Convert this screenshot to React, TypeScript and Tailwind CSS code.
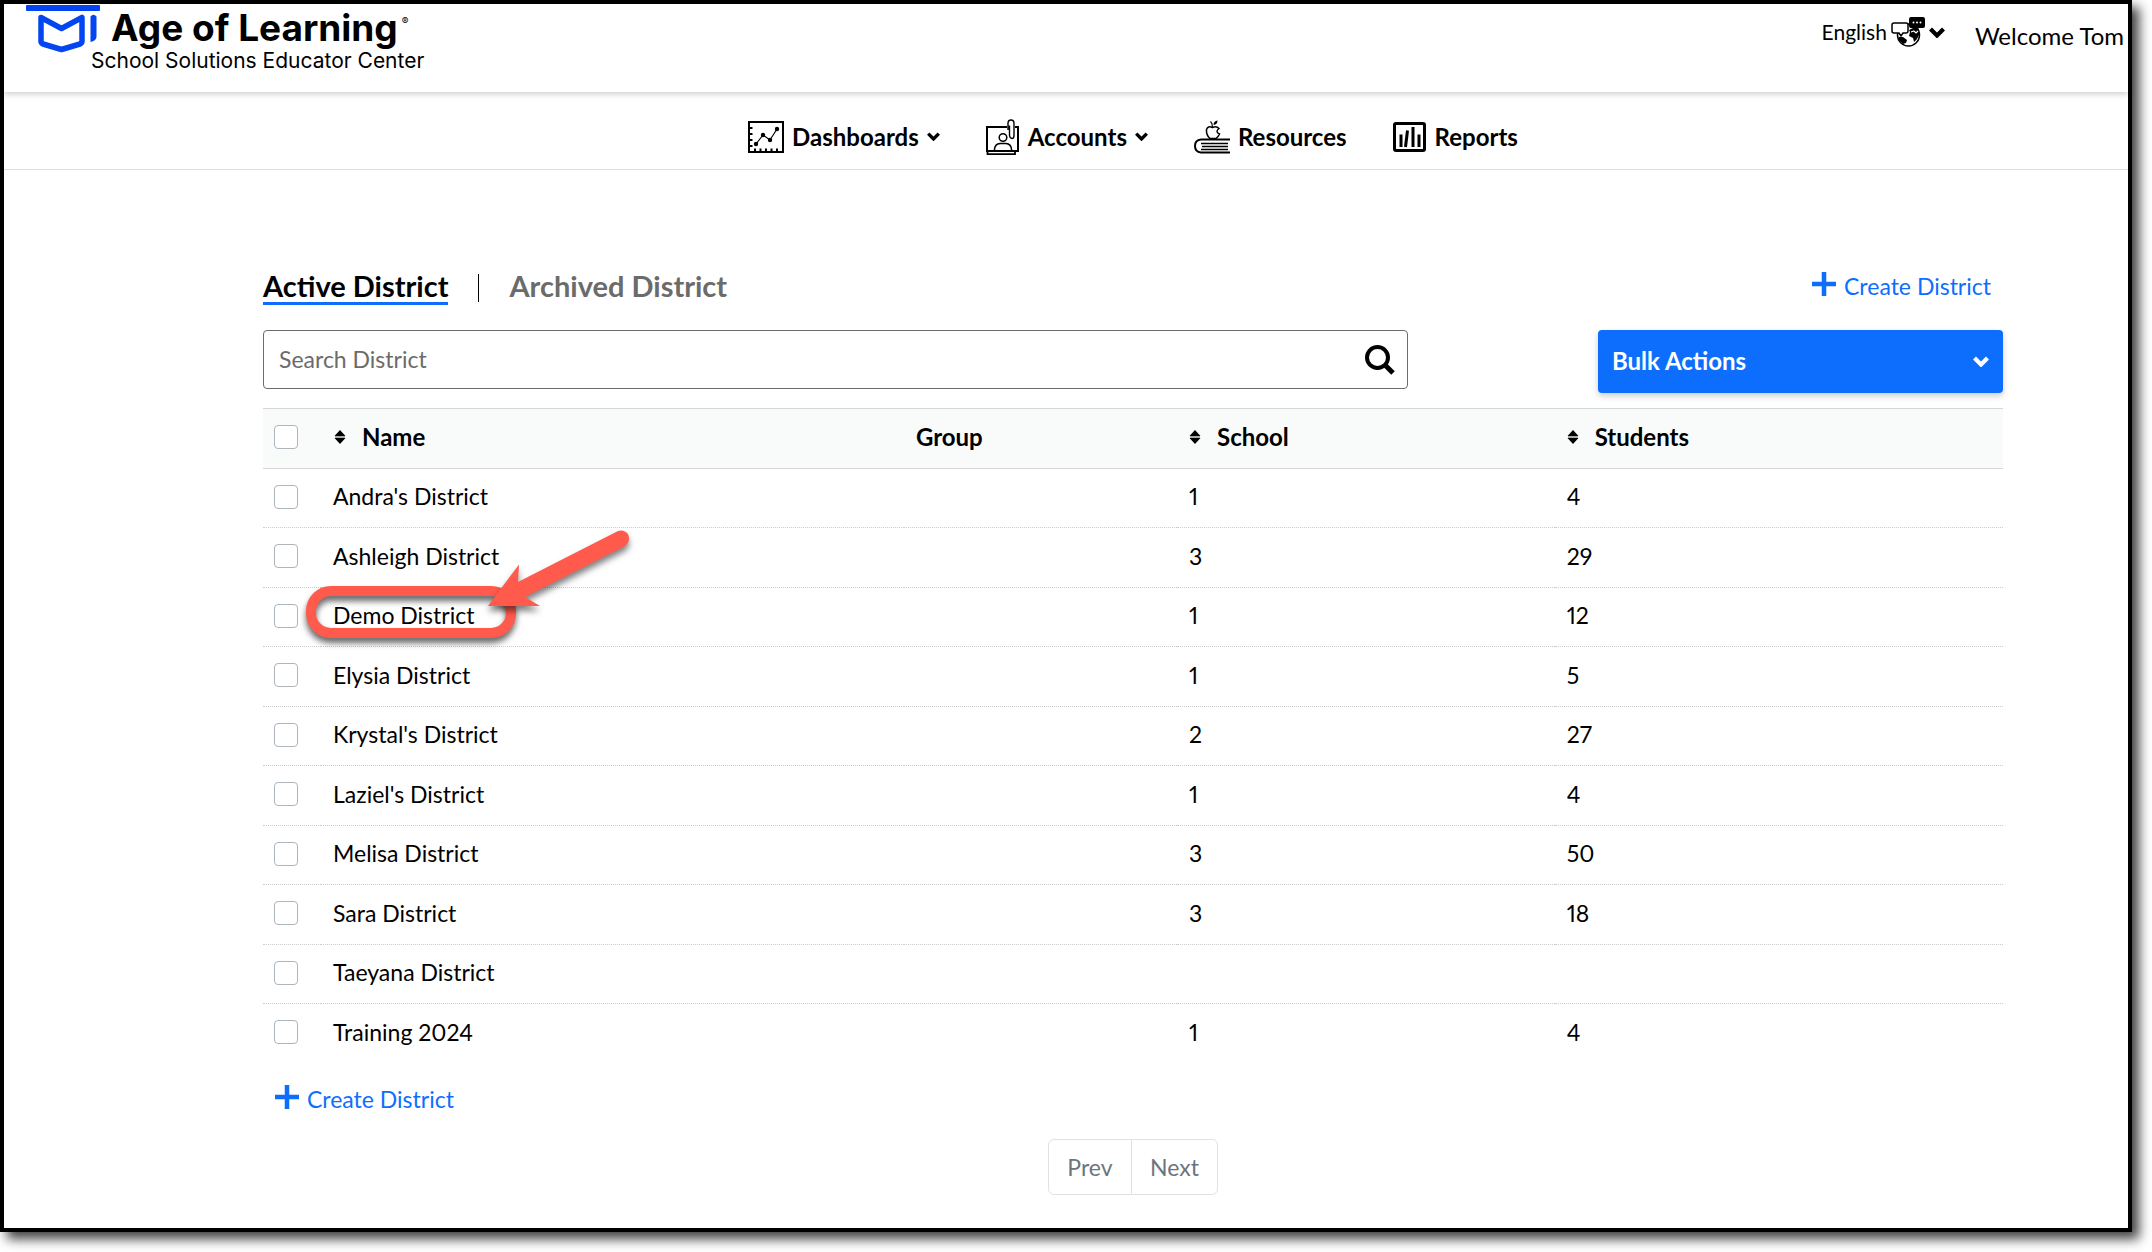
import React from 'react';

interface District {
  name: string;
  group?: string;
  schools?: number;
  students?: number;
  highlighted?: boolean;
}

const districts: District[] = [
  { name: "Andra's District", schools: 1, students: 4 },
  { name: 'Ashleigh District', schools: 3, students: 29 },
  { name: 'Demo District', schools: 1, students: 12, highlighted: true },
  { name: 'Elysia District', schools: 1, students: 5 },
  { name: "Krystal's District", schools: 2, students: 27 },
  { name: "Laziel's District", schools: 1, students: 4 },
  { name: 'Melisa District', schools: 3, students: 50 },
  { name: 'Sara District', schools: 3, students: 18 },
  { name: 'Taeyana District' },
  { name: 'Training 2024', schools: 1, students: 4 },
];

const LogoMark = () => (
  <svg width="74" height="48" viewBox="0 0 74 48" className="shrink-0" aria-hidden="true">
    <rect x="0" y="0" width="74" height="6" rx="1" fill="#0345f0" />
    <path
      d="M15 12.5 35.500 23.500 56 12.500V36.500Q56 38 54 39L35.500 44.500 17 39Q15 38 15 36.500Z"
      fill="none"
      stroke="#0345f0"
      strokeWidth="5.500"
      strokeLinejoin="round"
    />
    <path d="M64.500 11.500Q67.500 8 70.500 11.500V32Q70 36 64.500 37Z" fill="#0345f0" />
  </svg>
);

const ChevronIcon = ({ className }: { className: string }) => (
  <svg viewBox="0 0 16 11" className={className} aria-hidden="true">
    <path d="M1.500 2 8 8.500 14.500 2" fill="none" stroke="currentColor" strokeWidth="4.200" />
  </svg>
);

const LanguageIcon = () => (
  <svg width="34" height="30" viewBox="0 0 34 30" aria-hidden="true">
    <circle cx="17.500" cy="18" r="11" fill="#fff" stroke="#000" strokeWidth="1.500" />
    <path d="M18 13 24 10 28 13 28.500 17 26 22 23 25 22 21 18 19 19 15Z" />
    <path d="M8 20 12 20 16 23 15 26 12 27 8 23Z" />
    <path d="M20 15 23 14 25 16 27 14" fill="none" stroke="#fff" strokeWidth="1.200" />
    <path
      d="M3 6H15Q17 6 17 8V14Q17 16 15 16H12L10 19 8 16H3Q1 16 1 14V8Q1 6 3 6Z"
      fill="#fff"
      stroke="#000"
      strokeWidth="1.500"
    />
    <path d="M20 0H32Q34 0 34 2V9Q34 11 32 11H28L24 14 22 11H20Q18 11 18 9V2Q18 0 20 0Z" />
    <circle cx="22.500" cy="5.500" r="1" fill="#fff" />
    <circle cx="26" cy="5.500" r="1" fill="#fff" />
    <circle cx="29.500" cy="5.500" r="1" fill="#fff" />
  </svg>
);

const DashboardsIcon = () => (
  <svg width="36" height="36" viewBox="0 0 36 36" fill="none" stroke="#000" aria-hidden="true">
    <rect x="1" y="3" width="34" height="30" strokeWidth="2" />
    <path d="M2 9H4.500M2 15H4.500M2 21H4.500M2 27H4.500M7 32V29.500M12.500 32V29.500M18 32V29.500M23.500 32V29.500M29 32V29.500" strokeWidth="2" />
    <path d="M8 25 15 16 22 21 29 10" strokeWidth="1.200" />
    <g fill="#000" stroke="none">
      <circle cx="8" cy="25" r="2.200" />
      <circle cx="15" cy="16" r="2.200" />
      <circle cx="22" cy="21" r="2.200" />
      <circle cx="29" cy="10" r="2.200" />
    </g>
  </svg>
);

const AccountsIcon = () => (
  <svg width="34" height="36" viewBox="0 0 34 36" fill="none" stroke="#000" aria-hidden="true">
    <path d="M21 8H1V32H32V8H29" strokeWidth="2" />
    <path d="M1.500 32V35.200H29V32" strokeWidth="1.800" />
    <circle cx="17" cy="18.500" r="3.800" strokeWidth="1.500" />
    <path d="M8.500 31V30Q9 25 14 24.500H20Q25 25 25.500 30V31" strokeWidth="1.500" />
    <path d="M22 11V4.500Q22 1 25 1T28 4.500V16.500Q28 19.500 26 19.500T23.500 16.500V6.500" strokeWidth="1.400" />
  </svg>
);

const ResourcesIcon = () => (
  <svg width="36" height="36" viewBox="0 0 36 36" fill="none" stroke="#000" aria-hidden="true">
    <path d="M36 20.500H7Q1 21 1 27T7 33.500H36" strokeWidth="2" />
    <path d="M7 24.500H34M8 27.500H34M7 30.500H34" strokeWidth="1.400" />
    <path
      d="M18.500 8.500Q14 6.500 12.500 10.500 12 16 16 19.500H22Q24.500 17.500 25.500 15 23 14 23 12.500T25 9.500Q22.500 6.500 18.500 8.500Z"
      strokeWidth="1.500"
    />
    <path d="M18.500 8Q18.500 4 16.500 2.500" strokeWidth="1.200" />
    <path d="M19.500 6Q19.500 2 23.500 1.500 23.500 5.500 19.500 6Z" fill="#000" stroke="none" />
  </svg>
);

const ReportsIcon = () => (
  <svg width="34" height="36" viewBox="0 0 34 36" fill="none" stroke="#000" aria-hidden="true">
    <rect x="1.500" y="4.500" width="30" height="27" rx="1.500" strokeWidth="3" />
    <path d="M8 15.500V28M20 8V28M26 15.500V28" strokeWidth="3" />
    <path d="M14.500 11.500 12.500 28" strokeWidth="3" />
  </svg>
);

const PlusIcon = () => (
  <svg width="24" height="24" viewBox="0 0 24 24" className="mb-1" aria-hidden="true">
    <path d="M12 0V24M0 12H24" stroke="currentColor" strokeWidth="4.500" />
  </svg>
);

const SearchIcon = () => (
  <svg width="30" height="30" viewBox="0 0 30 30" fill="none" stroke="#000" aria-hidden="true">
    <circle cx="12.500" cy="12.500" r="10.500" strokeWidth="4" />
    <path d="M20 20 28 28" strokeWidth="5" />
  </svg>
);

const SortIcon = () => (
  <svg width="12" height="14" viewBox="0 0 12 14" aria-hidden="true">
    <rect x="1" y="6" width="10" height="2" fill="#aaa" />
    <path d="M6 0 11.500 6H.5ZM6 14 11.500 8H.5Z" />
  </svg>
);

// Callout ring and arrow drawn over the highlighted row
const Callout = () => (
  <svg
    width="350"
    height="140"
    viewBox="0 0 350 140"
    className="pointer-events-none absolute -top-17 -left-7 z-10 max-w-none"
    aria-hidden="true"
  >
    <g className="drop-shadow-[0_5px_3px_rgba(0,0,0,0.6)]">
      <rect x="18" y="71" width="200" height="42" rx="20" fill="none" stroke="#ff5a4c" strokeWidth="10" />
    </g>
    <g className="drop-shadow-[0_5px_3px_rgba(0,0,0,0.5)]" fill="#ff5a4c">
      <path d="M195 86 226 44.500 225 62 325 11Q331 9 335 14 338 21 332 26L232 77 247 86Z" />
    </g>
  </svg>
);

const NavLink = ({ icon, label, menu }: { icon: React.ReactNode; label: string; menu?: boolean }) => {
  const content = (
    <>
      {icon}
      <span>{label}</span>
      {menu && <ChevronIcon className="w-[13px]" />}
    </>
  );

  return menu ? (
    <button type="button" className="flex items-center gap-2">
      {content}
    </button>
  ) : (
    <a href="#" className="flex items-center gap-2">
      {content}
    </a>
  );
};

const Checkbox = ({ label }: { label: string }) => (
  <input
    type="checkbox"
    aria-label={label}
    className="block size-6 appearance-none rounded border border-[#adb5bd] bg-white"
  />
);

const SortHeader = ({ label }: { label: string }) => (
  <button type="button" className="flex items-center gap-4 font-bold">
    <SortIcon />
    {label}
  </button>
);

const CreateLink = () => (
  <a href="#" className="flex items-center gap-2 text-[#0d6efd]">
    <PlusIcon />
    Create District
  </a>
);

const Header = () => (
  <header className="flex h-22 items-start justify-between pr-1 pl-[22px] shadow-[0_2px_6px_rgba(0,0,0,0.2)]">
    <a href="#" className="flex pt-px font-['Inter',sans-serif]">
      <LogoMark />
      <div className="-ml-[9px]">
        <div className="flex pl-5 text-[37px] leading-[46px] font-bold">
          Age of Learning
          <span className="pt-2 pl-1 text-[10px] leading-4 font-normal">®</span>
        </div>
        <div className="text-[21px] leading-5">School Solutions Educator Center</div>
      </div>
    </a>
    <div className="flex items-start gap-[30px] pt-3">
      <button type="button" className="flex items-center gap-1 text-[21px]">
        English
        <LanguageIcon />
        <ChevronIcon className="w-4" />
      </button>
      <span className="pt-1 text-2xl">Welcome Tom</span>
    </div>
  </header>
);

const App: React.FC = () => {
  return (
    <div className="pr-5 pb-5 font-['Lato',sans-serif] text-[23px] leading-8 text-black">
      <div className="border-4 border-black bg-white shadow-[7px_7px_11px_rgba(0,0,0,0.75)]">
        <Header />

        <nav className="flex h-[78px] items-center justify-center gap-[46px] border-b border-[#dcdcdc] pt-3 pr-[125px] pl-[259px] text-2xl font-bold">
          <NavLink icon={<DashboardsIcon />} label="Dashboards" menu />
          <NavLink icon={<AccountsIcon />} label="Accounts" menu />
          <NavLink icon={<ResourcesIcon />} label="Resources" />
          <NavLink icon={<ReportsIcon />} label="Reports" />
        </nav>

        <main className="pt-25 pr-[125px] pb-[33px] pl-[259px]">
          {/* Tabs */}
          <div className="flex h-9 items-start justify-between pr-3">
            <div className="flex items-center text-[29px] font-bold">
              <a href="#" className="border-b-3 border-[#0d6efd]">
                Active District
              </a>
              <span className="mx-[30px] h-7 w-px bg-black" />
              <a href="#" className="border-b-3 border-transparent text-[#6b6b6b]">
                Archived District
              </a>
            </div>
            <CreateLink />
          </div>

          {/* Search and bulk actions */}
          <div className="mt-6 flex items-start justify-between">
            <form className="flex h-[59px] w-[1145px] items-center rounded border border-[#6b6b6b] pr-3">
              <input
                type="text"
                aria-label="Search District"
                placeholder="Search District"
                className="h-full min-w-0 flex-1 px-[15px] pb-0.5 outline-none placeholder:text-[#6b6b6b]"
              />
              <button type="button" aria-label="Search">
                <SearchIcon />
              </button>
            </form>
            <button
              type="button"
              className="flex h-[63px] w-[405px] items-center justify-between rounded bg-[#0d6efd] px-3.5 text-2xl font-bold text-white shadow-[0_3px_6px_rgba(0,0,0,0.2)]"
            >
              <span className="pb-0.5">Bulk Actions</span>
              <ChevronIcon className="w-4" />
            </button>
          </div>

          {/* District table */}
          <table className="mt-[15px] w-full table-fixed text-left proportional-nums">
            <thead className="text-2xl">
              <tr className="h-15 border-y border-[#d5d7d8] bg-[#f9fbfa]">
                <th className="w-[58px] pb-1 pl-[11px]">
                  <Checkbox label="Select all districts" />
                </th>
                <th className="w-[33.5%] px-[13px] pb-1">
                  <SortHeader label="Name" />
                </th>
                <th className="w-[15.7%] px-3 pb-1">Group</th>
                <th className="w-[21.7%] px-3 pb-1">
                  <SortHeader label="School" />
                </th>
                <th className="px-3 pb-1">
                  <SortHeader label="Students" />
                </th>
              </tr>
            </thead>
            <tbody>
              {districts.map((district) => (
                <tr
                  key={district.name}
                  className="border-b border-dotted border-[#cccccc] last:border-b-0 odd:h-[59px] even:h-[60px]"
                >
                  <td className="pb-[3px] pl-[11px]">
                    <Checkbox label={`Select ${district.name}`} />
                  </td>
                  <td className="relative px-3 pb-1">
                    {district.name}
                    {district.highlighted && <Callout />}
                  </td>
                  <td className="px-3 pb-1">{district.group}</td>
                  <td className="px-3 pb-1">{district.schools}</td>
                  <td className="px-3 pb-1">{district.students}</td>
                </tr>
              ))}
            </tbody>
          </table>

          <div className="mt-[19px] flex pl-3">
            <CreateLink />
          </div>

          {/* Pagination */}
          <div className="mt-6 flex justify-center text-[#6c757d]">
            <button type="button" className="h-14 w-[84px] rounded-l-md border border-[#dee2e6]">
              Prev
            </button>
            <button type="button" className="-ml-px h-14 w-[87px] rounded-r-md border border-[#dee2e6]">
              Next
            </button>
          </div>
        </main>
      </div>
    </div>
  );
};

export default App;
